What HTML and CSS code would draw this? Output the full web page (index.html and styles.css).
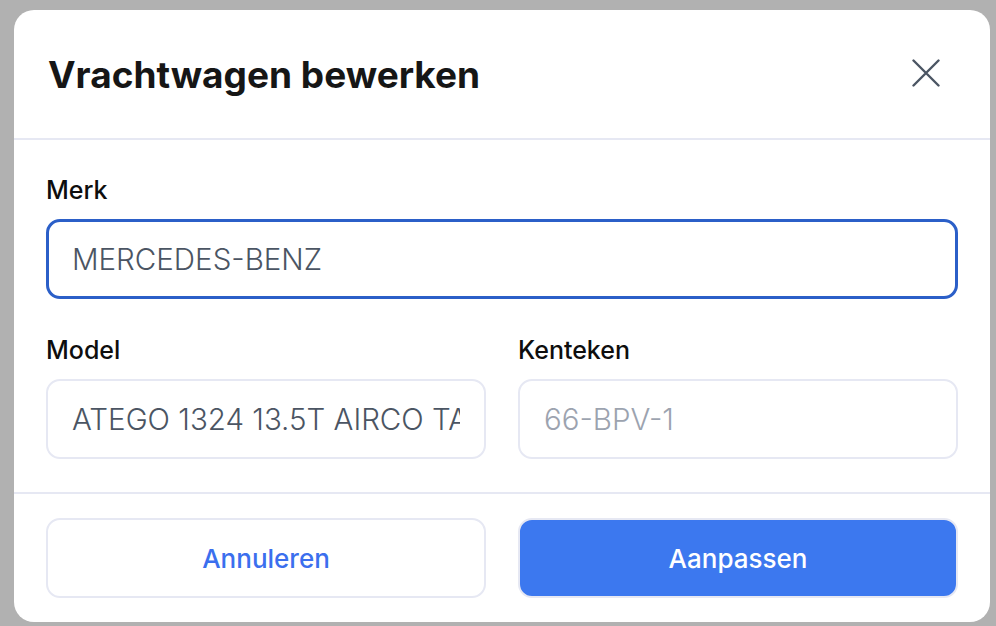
FILE: index.html
```html
<!DOCTYPE html>
<html lang="nl">
<head>
<meta charset="utf-8">
<title>Vrachtwagen bewerken</title>
<link rel="stylesheet" href="styles.css">
</head>
<body>
<div class="backdrop">
  <div class="modal">
    <div class="modal-header">
      <h2 class="modal-title">Vrachtwagen bewerken</h2>
      <button class="close-btn" aria-label="Sluiten">
        <svg width="28" height="28" viewBox="0 0 28 28" fill="none" stroke="#4b5563" stroke-width="2.4" stroke-linecap="round"><path d="M1.5 1.5L26.5 26.5M26.5 1.5L1.5 26.5"/></svg>
      </button>
    </div>
    <div class="modal-body">
      <div class="field">
        <label class="label" for="merk">Merk</label>
        <input id="merk" class="input input-focus" value="MERCEDES-BENZ">
      </div>
      <div class="row">
        <div class="field">
          <label class="label" for="model">Model</label>
          <input id="model" class="input" value="ATEGO 1324 13.5T AIRCO TAIL">
        </div>
        <div class="field">
          <label class="label" for="kenteken">Kenteken</label>
          <input id="kenteken" class="input" placeholder="66-BPV-1">
        </div>
      </div>
    </div>
    <div class="modal-footer">
      <button class="btn btn-secondary">Annuleren</button>
      <button class="btn btn-primary">Aanpassen</button>
    </div>
  </div>
</div>
</body>
</html>
```

FILE: styles.css
```css
* { box-sizing: border-box; }
html, body { margin: 0; padding: 0; }
body {
  background: #b1b1b1;
  font-family: "Inter", "Liberation Sans", sans-serif;
  width: 996px;
  height: 626px;
  overflow: hidden;
}
.backdrop {
  padding: 10px 6px 4px 14px;
}
.modal {
  background: #fff;
  border-radius: 20px;
  width: 976px;
  height: 612px;
  display: flex;
  flex-direction: column;
}
.modal-header {
  height: 130px;
  flex-shrink: 0;
  border-bottom: 2px solid #e6e8f3;
  display: flex;
  align-items: center;
  justify-content: space-between;
  padding: 0 50px 0 34px;
}
.modal-title {
  margin: 0;
  font-size: 37px;
  font-weight: 700;
  color: #161616;
}
.close-btn {
  border: 0;
  background: none;
  padding: 0;
  width: 28px;
  height: 28px;
  display: flex;
  margin-bottom: 2px;
}
.modal-body {
  padding: 36px 32px 33px;
  display: flex;
  flex-direction: column;
  gap: 37px;
  border-bottom: 2px solid #e6e8f3;
}
.row {
  display: grid;
  grid-template-columns: minmax(0, 1fr) minmax(0, 1fr);
  gap: 32px;
}
.field {
  display: flex;
  flex-direction: column;
  gap: 14px;
  min-width: 0;
}
.label {
  font-size: 25px;
  line-height: 29px;
  font-weight: 500;
  color: #0e0e0e;
}
.input {
  width: 100%;
  height: 80px;
  border: 2px solid #e6e8f3;
  border-radius: 14px;
  padding: 0 24px;
  font-family: inherit;
  font-size: 29.5px;
  font-weight: 300;
  color: #4b5563;
  background: #fff;
  outline: none;
  margin: 0;
}
.input::placeholder { color: #9ca3af; opacity: 1; }
.input-focus {
  border: 3px solid #2b5fc8;
  padding-left: 23px;
}
.modal-footer {
  display: grid;
  grid-template-columns: minmax(0, 1fr) minmax(0, 1fr);
  gap: 32px;
  padding: 24px 32px 24px;
}
.btn {
  height: 80px;
  border-radius: 14px;
  font-family: inherit;
  font-size: 26px;
  font-weight: 500;
  cursor: pointer;
}
.btn-secondary {
  background: #fff;
  border: 2px solid #e6e8f3;
  color: #3b6fee;
}
.btn-primary {
  background: #3c78ef;
  border: 2px solid #e6e8f3;
  color: #fff;
}
```
